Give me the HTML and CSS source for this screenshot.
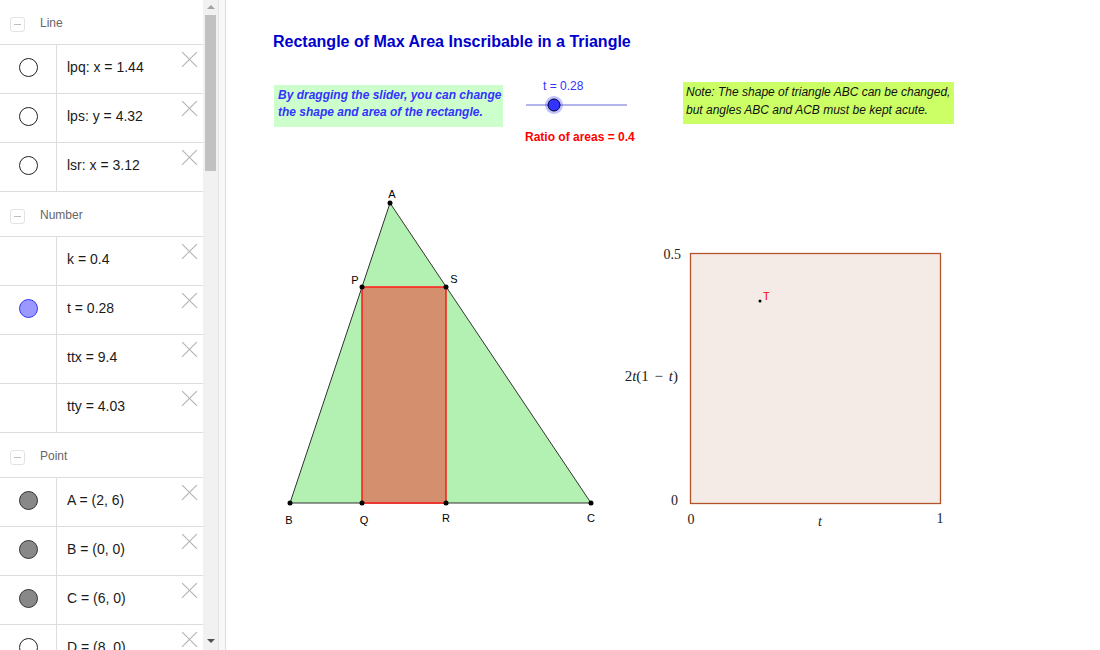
FILE: index.html
```html
<!DOCTYPE html>
<html>
<head>
<meta charset="utf-8">
<link rel="stylesheet" href="styles.css">
</head>
<body>
<div class="app">
  <div class="algebra">
    <div class="list">
      <div class="group"><span class="toggle"></span><span class="gname">Line</span></div>
      <div class="row"><div class="mark"><span class="dot empty"></span></div><div class="expr">lpq: x = 1.44</div><span class="close"></span></div>
      <div class="row"><div class="mark"><span class="dot empty"></span></div><div class="expr">lps: y = 4.32</div><span class="close"></span></div>
      <div class="row"><div class="mark"><span class="dot empty"></span></div><div class="expr">lsr: x = 3.12</div><span class="close"></span></div>
      <div class="group"><span class="toggle"></span><span class="gname">Number</span></div>
      <div class="row"><div class="mark"></div><div class="expr">k = 0.4</div><span class="close"></span></div>
      <div class="row"><div class="mark"><span class="dot blue"></span></div><div class="expr">t = 0.28</div><span class="close"></span></div>
      <div class="row"><div class="mark"></div><div class="expr">ttx = 9.4</div><span class="close"></span></div>
      <div class="row"><div class="mark"></div><div class="expr">tty = 4.03</div><span class="close"></span></div>
      <div class="group"><span class="toggle"></span><span class="gname">Point</span></div>
      <div class="row"><div class="mark"><span class="dot gray"></span></div><div class="expr">A = (2, 6)</div><span class="close"></span></div>
      <div class="row"><div class="mark"><span class="dot gray"></span></div><div class="expr">B = (0, 0)</div><span class="close"></span></div>
      <div class="row"><div class="mark"><span class="dot gray"></span></div><div class="expr">C = (6, 0)</div><span class="close"></span></div>
      <div class="row"><div class="mark"><span class="dot empty"></span></div><div class="expr">D = (8, 0)</div><span class="close"></span></div>
    </div>
    <div class="scrollbar">
      <span class="arrow up"></span>
      <div class="track"><div class="thumb"></div></div>
      <span class="arrow down"></span>
    </div>
  </div>
  <div class="splitter"></div>
  <div class="graphics">
    <svg class="canvas" width="874" height="650" viewBox="226 0 874 650">
      <polygon points="390,203 290,503 591,503" fill="#b3f1b3" stroke="#333" stroke-width="1"/>
      <rect x="362" y="287" width="84" height="216" fill="#d4906e" stroke="#ff1a1a" stroke-width="1.5"/>
      <g fill="#000">
        <circle cx="390" cy="203" r="2.5"/>
        <circle cx="290" cy="503" r="2.5"/>
        <circle cx="591" cy="503" r="2.5"/>
        <circle cx="362" cy="287" r="2.5"/>
        <circle cx="446" cy="287" r="2.5"/>
        <circle cx="362" cy="503" r="2.5"/>
        <circle cx="446" cy="503" r="2.5"/>
      </g>
      <g class="plabel">
        <text x="392" y="198" text-anchor="middle">A</text>
        <text x="289" y="524" text-anchor="middle">B</text>
        <text x="364" y="524" text-anchor="middle">Q</text>
        <text x="446" y="522" text-anchor="middle">R</text>
        <text x="591" y="522" text-anchor="middle">C</text>
        <text x="355" y="284" text-anchor="middle">P</text>
        <text x="454" y="283" text-anchor="middle">S</text>
      </g>
      <line x1="526" y1="105" x2="627" y2="105" stroke="#9a9ae8" stroke-width="1.5"/>
      <circle cx="554" cy="105" r="9" fill="#3333ff" fill-opacity="0.3"/>
      <circle cx="554" cy="105" r="6" fill="#3333ff" stroke="#000033" stroke-width="1"/>
      <rect x="690.5" y="253.5" width="250" height="250" fill="#f4ebe6" stroke="#b3532a" stroke-width="1.3"/>
      <circle cx="760" cy="301" r="1.5" fill="#000"/>
      <text class="tlabel" x="763" y="300">T</text>
      <g class="mlabel">
        <text x="681" y="259" text-anchor="end">0.5</text>
        <text class="big" x="678" y="381" text-anchor="end" xml:space="preserve">2<tspan font-style="italic">t</tspan>(1 − <tspan font-style="italic">t</tspan>)</text>
        <text x="678" y="505" text-anchor="end">0</text>
        <text x="691" y="524" text-anchor="middle">0</text>
        <text x="820" y="526" text-anchor="middle" font-style="italic">t</text>
        <text x="940" y="523" text-anchor="middle">1</text>
      </g>
    </svg>
    <div class="title">Rectangle of Max Area Inscribable in a Triangle</div>
    <div class="hint">By dragging the slider, you can change<br>the shape and area of the rectangle.</div>
    <div class="slabel">t = 0.28</div>
    <div class="ratio">Ratio of areas = 0.4</div>
    <div class="note">Note: The shape of triangle ABC can be changed,<br>but angles ABC and ACB must be kept acute.</div>
  </div>
</div>
</body>
</html>
```
FILE: styles.css
```css
html, body {
  margin: 0;
  padding: 0;
  background: #fff;
  overflow: hidden;
}
body {
  font-family: "Liberation Sans", Arial, sans-serif;
}
.app {
  display: flex;
  width: 1100px;
  height: 650px;
  overflow: hidden;
}
.algebra {
  display: flex;
  width: 218px;
  height: 650px;
  flex: none;
  border-right: 1px solid #e2e2e2;
}
.list {
  width: 203px;
  flex: none;
  overflow: hidden;
}
.group {
  height: 44px;
  border-bottom: 1px solid #dddddd;
  display: flex;
  align-items: center;
  box-sizing: content-box;
}
.toggle {
  width: 13px;
  height: 13px;
  margin-left: 10px;
  margin-top: 4px;
  border: 1px solid #e3e3e3;
  border-radius: 3px;
  position: relative;
}
.toggle::after {
  content: "";
  position: absolute;
  left: 3px;
  right: 3px;
  top: 6px;
  height: 1px;
  background: #bdbdbd;
}
.gname {
  margin-left: 15px;
  margin-top: 2px;
  font-size: 12px;
  color: #666;
}
.row {
  height: 48px;
  border-bottom: 1px solid #dddddd;
  display: flex;
  position: relative;
}
.mark {
  width: 56px;
  border-right: 1px solid #dddddd;
  display: flex;
  align-items: center;
  justify-content: center;
  flex: none;
}
.dot {
  width: 19px;
  height: 19px;
  border-radius: 50%;
  box-sizing: border-box;
  margin-top: -3px;
  margin-left: 1px;
}
.dot.empty {
  border: 1px solid #222;
  background: #fff;
}
.dot.blue {
  border: 1px solid #3333ff;
  background: #9999ff;
}
.dot.gray {
  border: 1px solid #333;
  background: #888888;
}
.expr {
  padding-left: 10px;
  padding-top: 14px;
  font-size: 14px;
  line-height: 16px;
  color: #1a1a1a;
  white-space: nowrap;
}
.close {
  position: absolute;
  right: 6px;
  top: 7px;
  width: 16px;
  height: 16px;
}
.close::before, .close::after {
  content: "";
  position: absolute;
  left: -2px;
  top: 7px;
  width: 21px;
  height: 1.3px;
  background: #b0b0b0;
  transform: rotate(45deg);
}
.close::after {
  transform: rotate(-45deg);
}
.scrollbar {
  width: 15px;
  flex: none;
  background: #f1f1f1;
  display: flex;
  flex-direction: column;
  align-items: center;
}
.arrow {
  width: 0;
  height: 0;
  border-left: 4px solid transparent;
  border-right: 4px solid transparent;
  flex: none;
}
.arrow.up {
  border-bottom: 4px solid #a3a3a3;
  margin-top: 5px;
  margin-bottom: 6px;
}
.arrow.down {
  border-top: 4px solid #505050;
  margin-top: auto;
  margin-bottom: 7px;
}
.track {
  width: 11px;
  flex: 1;
}
.thumb {
  width: 11px;
  height: 156px;
  background: #c1c1c1;
}
.splitter {
  width: 6px;
  flex: none;
  background: #f8f8f8;
  border-right: 1px solid #dedede;
}
.graphics {
  position: relative;
  flex: 1;
  height: 650px;
}
.canvas {
  display: block;
}
.plabel text {
  font-family: "Liberation Sans", Arial, sans-serif;
  font-size: 11px;
  fill: #000;
}
.tlabel {
  font-family: "Liberation Sans", Arial, sans-serif;
  font-size: 11px;
  fill: #ff0000;
}
.mlabel text {
  font-family: "Liberation Serif", "Times New Roman", serif;
  font-size: 14px;
  fill: #222;
}
.mlabel text.big {
  font-size: 15px;
  word-spacing: 2px;
}
.title {
  position: absolute;
  left: 47px;
  top: 33px;
  font-size: 16px;
  font-weight: bold;
  color: #0000cc;
  white-space: nowrap;
}
.hint {
  position: absolute;
  left: 48px;
  top: 85px;
  width: 229px;
  height: 42px;
  padding-left: 4px;
  box-sizing: border-box;
  padding-top: 2px;
  background: #ccffcc;
  color: #3333ff;
  font-size: 12px;
  line-height: 17px;
  font-weight: bold;
  font-style: italic;
  white-space: nowrap;
}
.slabel {
  position: absolute;
  left: 317px;
  top: 79px;
  font-size: 12px;
  color: #3333ff;
  white-space: nowrap;
}
.ratio {
  position: absolute;
  left: 299px;
  top: 130px;
  font-size: 12px;
  font-weight: bold;
  color: #ff0000;
  white-space: nowrap;
}
.note {
  position: absolute;
  left: 457px;
  top: 82px;
  width: 271px;
  height: 42px;
  padding-left: 3px;
  padding-top: 1px;
  box-sizing: border-box;
  background: #ccff66;
  color: #111;
  font-size: 12px;
  line-height: 18px;
  font-style: italic;
  white-space: nowrap;
}
```
